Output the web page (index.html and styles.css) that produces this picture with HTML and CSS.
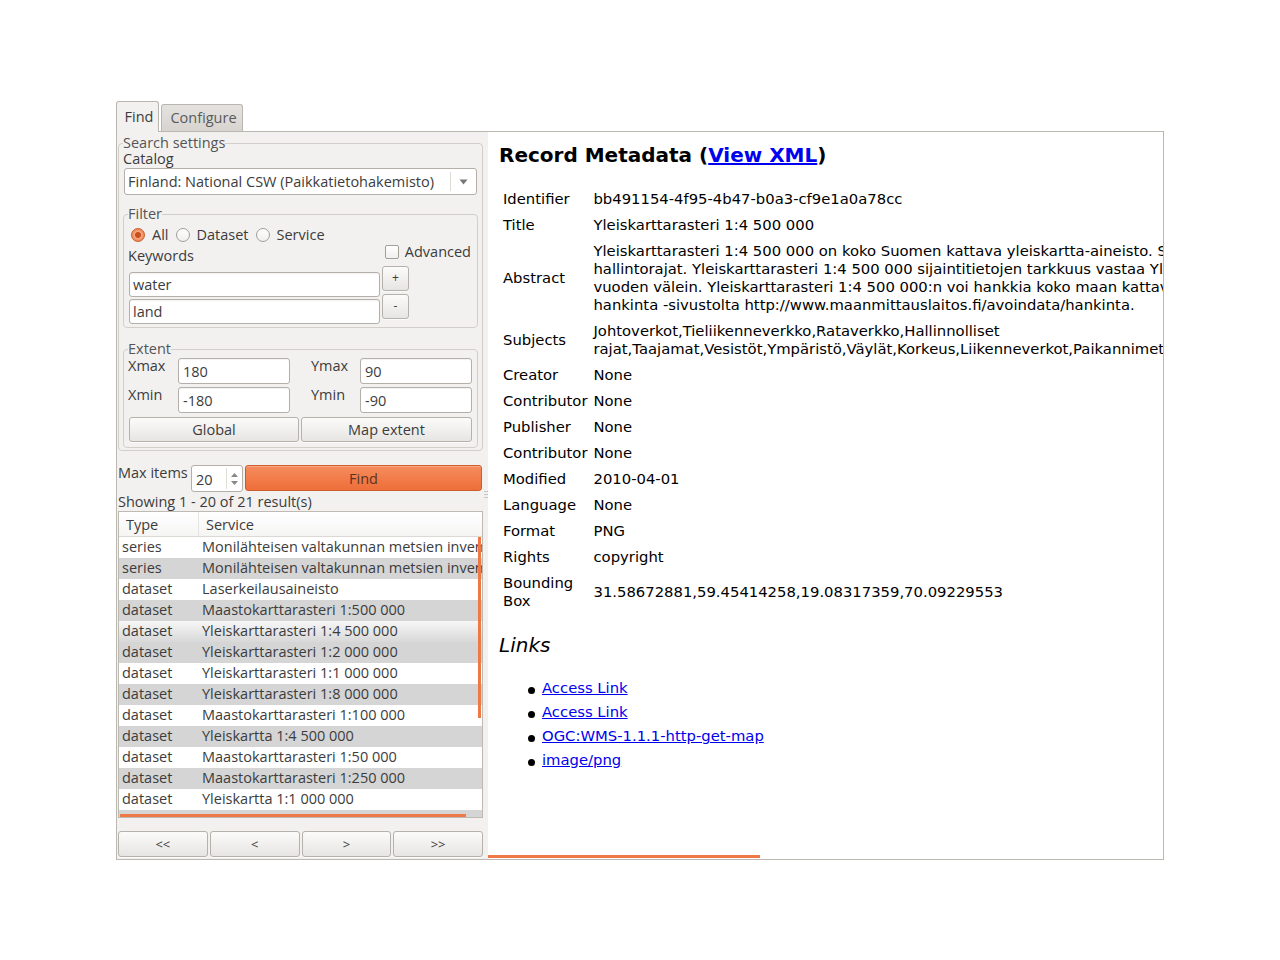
FILE: index.html
```html
<!DOCTYPE html>
<html>
<head>
<meta charset="utf-8">
<title>MetaSearch</title>
<link rel="stylesheet" href="styles.css">
</head>
<body>
<div class="window">
  <div class="tabbar">
    <div class="tab tab-active">Find</div>
    <div class="tab tab-idle">Configure</div>
  </div>
  <div class="pane">
    <div class="left">
      <fieldset class="group outer">
        <legend>Search settings</legend>
        <div class="lbl catalog-lbl">Catalog</div>
        <div class="combo">
          <span class="combo-text">Finland: National CSW (Paikkatietohakemisto)</span>
          <span class="combo-btn"><svg width="9" height="6" viewBox="0 0 9 6"><path d="M0.5 0.5 L8.5 0.5 L4.5 5.5 Z" fill="#777"/></svg></span>
        </div>
        <fieldset class="group inner filter">
          <legend>Filter</legend>
          <div class="radios">
            <span class="radio on"></span><span class="opt">All</span>
            <span class="radio"></span><span class="opt">Dataset</span>
            <span class="radio"></span><span class="opt">Service</span>
          </div>
          <div class="kw-head">
            <span class="kw-lbl">Keywords</span>
            <span class="check"><span class="box"></span><span>Advanced</span></span>
          </div>
          <div class="kw-body">
            <div class="kw-inputs">
              <div class="input">water</div>
              <div class="input">land</div>
            </div>
            <div class="kw-btns">
              <div class="btn sm">+</div>
              <div class="btn sm">-</div>
            </div>
          </div>
        </fieldset>
        <fieldset class="group inner extent">
          <legend>Extent</legend>
          <div class="extent-grid">
            <span class="elbl">Xmax</span><div class="input ein">180</div>
            <span class="elbl ylbl">Ymax</span><div class="input ein">90</div>
            <span class="elbl">Xmin</span><div class="input ein">-180</div>
            <span class="elbl ylbl">Ymin</span><div class="input ein">-90</div>
          </div>
          <div class="extent-btns">
            <div class="btn eb1">Global</div>
            <div class="btn eb2">Map extent</div>
          </div>
        </fieldset>
      </fieldset>

      <div class="find-row">
        <span class="max-lbl">Max items</span>
        <div class="spin">
          <span class="spin-val">20</span>
          <span class="spin-btns">
            <svg width="7" height="4" viewBox="0 0 7 4"><path d="M0 4 L7 4 L3.5 0 Z" fill="#888"/></svg>
            <svg width="7" height="4" viewBox="0 0 7 4"><path d="M0 0 L7 0 L3.5 4 Z" fill="#888"/></svg>
          </span>
        </div>
        <div class="find-btn">Find</div>
      </div>
      <div class="showing">Showing 1 - 20 of 21 result(s)</div>

      <div class="results">
        <div class="rhead"><span class="hc1">Type</span><span class="hc2">Service</span></div>
        <div class="rbody">
          <div class="row"><span class="c1">series</span><span class="c2">Monilähteisen valtakunnan metsien inventoinnin (MVMI) kartta-aineisto</span></div>
          <div class="row alt"><span class="c1">series</span><span class="c2">Monilähteisen valtakunnan metsien inventoinnin (MVMI) kartta-aineisto 2011</span></div>
          <div class="row"><span class="c1">dataset</span><span class="c2">Laserkeilausaineisto</span></div>
          <div class="row alt"><span class="c1">dataset</span><span class="c2">Maastokarttarasteri 1:500 000</span></div>
          <div class="row sel"><span class="c1">dataset</span><span class="c2">Yleiskarttarasteri 1:4 500 000</span></div>
          <div class="row alt"><span class="c1">dataset</span><span class="c2">Yleiskarttarasteri 1:2 000 000</span></div>
          <div class="row"><span class="c1">dataset</span><span class="c2">Yleiskarttarasteri 1:1 000 000</span></div>
          <div class="row alt"><span class="c1">dataset</span><span class="c2">Yleiskarttarasteri 1:8 000 000</span></div>
          <div class="row"><span class="c1">dataset</span><span class="c2">Maastokarttarasteri 1:100 000</span></div>
          <div class="row alt"><span class="c1">dataset</span><span class="c2">Yleiskartta 1:4 500 000</span></div>
          <div class="row"><span class="c1">dataset</span><span class="c2">Maastokarttarasteri 1:50 000</span></div>
          <div class="row alt"><span class="c1">dataset</span><span class="c2">Maastokarttarasteri 1:250 000</span></div>
          <div class="row"><span class="c1">dataset</span><span class="c2">Yleiskartta 1:1 000 000</span></div>
          <div class="row alt"><span class="c1">dataset</span><span class="c2">Yleiskartta 1:2 000 000</span></div>
          <div class="vscroll"></div>
          <div class="hscroll"></div>
        </div>
      </div>

      <div class="pager">
        <div class="btn pb">&lt;&lt;</div>
        <div class="btn pb">&lt;</div>
        <div class="btn pb">&gt;</div>
        <div class="btn pb">&gt;&gt;</div>
      </div>
    </div>

    <div class="splitter"><span class="grip"></span></div>

    <div class="right">
      <h2 class="rec-title">Record Metadata (<a href="#">View XML</a>)</h2>
      <table class="meta">
        <tr><td class="k">Identifier</td><td>bb491154-4f95-4b47-b0a3-cf9e1a0a78cc</td></tr>
        <tr><td class="k">Title</td><td>Yleiskarttarasteri 1:4 500 000</td></tr>
        <tr><td class="k">Abstract</td><td>Yleiskarttarasteri 1:4 500 000 on koko Suomen kattava yleiskartta-aineisto. Sen sisältönä ovat vesistöt, tiestö ja rautatiet<br>hallintorajat. Yleiskarttarasteri 1:4 500 000 sijaintitietojen tarkkuus vastaa Yleiskartta 1:4 500 000 -tuotetta ja se päivitetään viiden<br>vuoden välein. Yleiskarttarasteri 1:4 500 000:n voi hankkia koko maan kattavana aineistona Maanmittauslaitoksen avoimien aineistojen<br>hankinta -sivustolta http://www.maanmittauslaitos.fi/avoindata/hankinta.</td></tr>
        <tr><td class="k">Subjects</td><td>Johtoverkot,Tieliikenneverkko,Rataverkko,Hallinnolliset<br>rajat,Taajamat,Vesistöt,Ympäristö,Väylät,Korkeus,Liikenneverkot,Paikannimet,Rakennukset</td></tr>
        <tr><td class="k">Creator</td><td>None</td></tr>
        <tr><td class="k">Contributor</td><td>None</td></tr>
        <tr><td class="k">Publisher</td><td>None</td></tr>
        <tr><td class="k">Contributor</td><td>None</td></tr>
        <tr><td class="k">Modified</td><td>2010-04-01</td></tr>
        <tr><td class="k">Language</td><td>None</td></tr>
        <tr><td class="k">Format</td><td>PNG</td></tr>
        <tr><td class="k">Rights</td><td>copyright</td></tr>
        <tr><td class="k">Bounding<br>Box</td><td>31.58672881,59.45414258,19.08317359,70.09229553</td></tr>
      </table>
      <h3 class="links-title">Links</h3>
      <ul class="links">
        <li><a href="#">Access Link</a></li>
        <li><a href="#">Access Link</a></li>
        <li><a href="#">OGC:WMS-1.1.1-http-get-map</a></li>
        <li><a href="#">image/png</a></li>
      </ul>
      <div class="rscroll"></div>
    </div>
  </div>
</div>
</body>
</html>
```

FILE: styles.css
```css
html, body {
  margin: 0;
  padding: 0;
  background: #ffffff;
}

.window {
  margin: 100px 0 0 116px;
  width: 1048px;
  font-family: "Open Sans", "DejaVu Sans", sans-serif;
  font-size: 14.5px;
  color: #3c3c3c;
}

/* ---------- tabs ---------- */
.tabbar {
  display: flex;
  align-items: flex-end;
  height: 31px;
  gap: 2px;
}

.tab {
  box-sizing: border-box;
  border: 1px solid #b9b5af;
  border-bottom: none;
  border-radius: 3px 3px 0 0;
  text-align: center;
  line-height: 26px;
}

.tab-active {
  width: 43px;
  height: 31px;
  margin-bottom: -1px;
  padding-left: 3px;
  background: #f2f1f0;
  position: relative;
  z-index: 1;
  color: #3c3c3c;
  line-height: 30px;
}

.tab-idle {
  width: 82px;
  height: 27px;
  padding-left: 3px;
  background: linear-gradient(#e4e2df, #d7d4d0);
  color: #5a5a5a;
}

/* ---------- pane ---------- */
.pane {
  box-sizing: border-box;
  height: 729px;
  border: 1px solid #bbb7b1;
  background: #f2f1f0;
  display: flex;
}

.left {
  box-sizing: border-box;
  width: 367px;
  padding: 0 1px;
  display: flex;
  flex-direction: column;
}

/* ---------- group boxes ---------- */
.group {
  margin: 0;
  border: 1px solid #d2cec9;
  border-radius: 4px;
  min-width: 0;
}

.group legend {
  padding: 0;
  line-height: 16px;
  color: #555555;
}

.outer {
  margin-top: 3px;
  padding: 0 4px 2px 4px;
}

.lbl {
  line-height: 16px;
}

.combo {
  box-sizing: border-box;
  margin: 1px 1px 0 1px;
  height: 27px;
  border: 1px solid #b4afa9;
  border-radius: 3px;
  background: #ffffff;
  display: flex;
  align-items: center;
  color: #3c3c3c;
}

.combo-text {
  flex: 1;
  padding-left: 3px;
  white-space: nowrap;
}

.combo-btn {
  width: 25px;
  height: 19px;
  border-left: 1px solid #dedbd7;
  display: flex;
  align-items: center;
  justify-content: center;
}

.inner {
  padding: 0 4px;
}

.filter {
  margin-top: 11px;
  padding-bottom: 3px;
}

.radios {
  margin-top: 4px;
  height: 18px;
  display: flex;
  align-items: center;
  line-height: 16px;
}

.radio {
  box-sizing: border-box;
  width: 14px;
  height: 14px;
  border-radius: 50%;
  border: 1px solid #a29e98;
  background: linear-gradient(#ffffff, #f0efed);
  margin-right: 7px;
}

.radio:first-child {
  margin-left: 3px;
}

.radio.on {
  border-color: #c6602f;
  background: radial-gradient(circle, #c9501d 0, #c9501d 2.6px, #f6a985 3.4px, #ef8453 6px);
}

.opt {
  margin-right: 7px;
}

.kw-head {
  height: 22px;
  display: flex;
  justify-content: space-between;
}

.kw-lbl {
  align-self: flex-end;
  line-height: 16px;
  margin-bottom: 2px;
}

.check {
  display: flex;
  align-items: center;
  margin-top: 1px;
  height: 14px;
  margin-right: 2px;
  line-height: 16px;
}

.check .box {
  box-sizing: border-box;
  width: 14px;
  height: 14px;
  border: 1px solid #a29e98;
  border-radius: 2px;
  background: linear-gradient(#ffffff, #f0efed);
  margin-right: 6px;
}

.kw-body {
  display: flex;
}

.kw-inputs {
  width: 251px;
  margin-left: 1px;
  padding-top: 6px;
  display: flex;
  flex-direction: column;
  gap: 2px;
}

.input {
  box-sizing: border-box;
  height: 25px;
  border: 1px solid #b4afa9;
  border-radius: 3px;
  background: #ffffff;
  padding-left: 3px;
  line-height: 23px;
  color: #3c3c3c;
  box-shadow: inset 0 1px 1px rgba(0, 0, 0, 0.05);
  white-space: nowrap;
}

.kw-btns {
  margin-left: 2px;
  width: 27px;
  display: flex;
  flex-direction: column;
  gap: 3px;
}

.btn {
  box-sizing: border-box;
  border: 1px solid #b5b1ab;
  border-radius: 3px;
  background: linear-gradient(#fbfbfa, #e7e5e2);
  text-align: center;
  color: #3c3c3c;
  box-shadow: 0 1px 0 rgba(255, 255, 255, 0.7);
}

.btn.sm {
  height: 25px;
  line-height: 22px;
  font-size: 12px;
}

.extent {
  margin-top: 13px;
  padding-bottom: 5px;
}

.extent-grid {
  margin-top: 1px;
  display: grid;
  grid-template-columns: 50px 112px 70px 112px;
  grid-auto-rows: 26px;
  row-gap: 3px;
}

.elbl {
  line-height: 16px;
}

.ylbl {
  padding-left: 21px;
}

.ein {
  height: 26px;
  line-height: 26px;
  padding-left: 4px;
}

.extent-btns {
  margin-top: 4px;
  padding-left: 1px;
  display: flex;
  gap: 2px;
}

.extent-btns .btn {
  height: 25px;
  line-height: 23px;
}

.eb1 {
  width: 170px;
}

.eb2 {
  width: 171px;
}

/* ---------- find row ---------- */
.find-row {
  margin-top: 14px;
  height: 27px;
  display: flex;
}

.max-lbl {
  width: 73px;
  line-height: 16px;
  white-space: nowrap;
}

.spin {
  box-sizing: border-box;
  width: 52px;
  height: 27px;
  border: 1px solid #b4afa9;
  border-radius: 3px;
  background: #ffffff;
  display: flex;
  align-items: center;
}

.spin-val {
  flex: 1;
  padding-left: 4px;
  padding-top: 2px;
}

.spin-btns {
  width: 15px;
  height: 21px;
  border-left: 1px solid #e2dfdb;
  display: flex;
  flex-direction: column;
  align-items: center;
  justify-content: center;
  gap: 4px;
}

.find-btn {
  box-sizing: border-box;
  flex: 1;
  margin: 0 1px 0 2px;
  height: 26px;
  border: 1px solid #cc5c2d;
  border-radius: 3px;
  background: linear-gradient(#f68c5d, #ee6e39);
  color: #5b3322;
  text-align: center;
  line-height: 25px;
  box-shadow: inset 0 1px 0 rgba(255, 255, 255, 0.25);
}

.showing {
  margin-top: 2px;
  line-height: 16px;
}

/* ---------- results table ---------- */
.results {
  box-sizing: border-box;
  margin-top: 1px;
  height: 307px;
  border: 1px solid #bdb9b3;
  background: #ffffff;
}

.rhead {
  height: 24px;
  border-bottom: 1px solid #dcd9d5;
  background: linear-gradient(#ffffff, #f5f5f4);
  display: flex;
  line-height: 25px;
}

.hc1 {
  width: 80px;
  box-sizing: border-box;
  padding-left: 7px;
  border-right: 1px solid #e6e4e1;
}

.hc2 {
  padding-left: 7px;
}

.rbody {
  position: relative;
  height: 280px;
  overflow: hidden;
}

.row {
  height: 21px;
  line-height: 20px;
  display: flex;
  white-space: nowrap;
}

.row.alt {
  background: #d5d5d5;
}

.row.sel {
  background: linear-gradient(#f7f7f7, #d8d8d8);
}

.c1 {
  width: 80px;
  flex: none;
  box-sizing: border-box;
  padding-left: 3px;
}

.c2 {
  padding-left: 3px;
}

.vscroll {
  position: absolute;
  top: 0;
  right: 1px;
  width: 3px;
  height: 181px;
  background: #f07746;
}

.hscroll {
  position: absolute;
  left: 1px;
  bottom: 0;
  width: 346px;
  height: 3px;
  background: #f07746;
}

.pager {
  margin-top: 13px;
  display: flex;
  gap: 2px;
}

.pb {
  flex: 1;
  height: 26px;
  line-height: 24px;
  font-size: 13px;
}

/* ---------- splitter ---------- */
.splitter {
  width: 4px;
  display: flex;
  flex-direction: column;
}

.grip {
  margin-top: 359px;
  width: 4px;
  height: 8px;
  background: repeating-linear-gradient(#c8c5c1 0, #c8c5c1 1px, transparent 1px, transparent 3px);
}

/* ---------- right: record metadata ---------- */
.right {
  box-sizing: border-box;
  width: 675px;
  position: relative;
  overflow: hidden;
  background: #ffffff;
  padding: 11px 0 0 11px;
  font-family: "DejaVu Sans", sans-serif;
  font-size: 14.8px;
  color: #000000;
}

.rec-title {
  margin: 0;
  font-size: 20px;
  font-weight: bold;
  line-height: 24px;
  white-space: nowrap;
}

.rec-title a,
.links a {
  color: #0000ee;
  text-decoration: underline;
}

.meta {
  margin-top: 18px;
  border-spacing: 2px;
  line-height: 18px;
}

.meta td {
  padding: 3px 2px;
  white-space: nowrap;
  vertical-align: middle;
}

.meta td.k {
  padding-right: 2px;
}

.links-title {
  margin: 18px 0 0 0;
  font-size: 20px;
  font-style: italic;
  font-weight: normal;
  line-height: 24px;
}

.links {
  margin: 19px 0 0 0;
  padding-left: 43px;
  line-height: 24px;
  list-style: none;
}

.links li {
  position: relative;
}

.links li::before {
  content: "";
  position: absolute;
  left: -14px;
  top: 11px;
  width: 7px;
  height: 7px;
  border-radius: 50%;
  background: #000000;
}

.rscroll {
  position: absolute;
  left: 0;
  bottom: 1px;
  width: 272px;
  height: 3px;
  background: #f07746;
}
```
